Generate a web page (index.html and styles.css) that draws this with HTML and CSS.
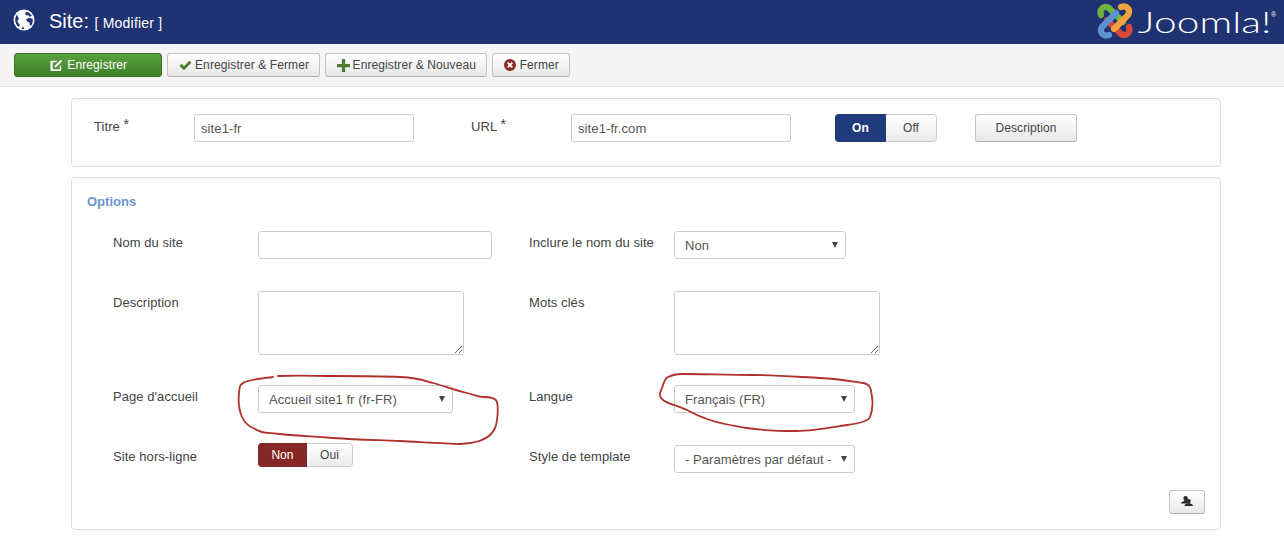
FILE: index.html
```html
<!DOCTYPE html>
<html lang="fr">
<head>
<meta charset="utf-8">
<title>Site: Modifier</title>
<link rel="stylesheet" href="styles.css">
</head>
<body>
<header class="topbar">
  <div class="title-group">
    <svg class="globe" viewBox="0 0 22 22" width="22" height="22"><circle cx="11" cy="11" r="10.500" fill="#fff"/><path fill="#1f3271" d="M4.300 5.300C3 6.800 2.200 8.800 2.200 11c0 2.900 1.400 5.500 3.600 7.100.6-.9.900-1.900.7-3.100-.9-.8-1.800-1.500-2-2.600-.2-1.200 1.300-1.400 1.300-2.600 0-1.300-1.500-2.200-1.500-4.100zM12 4.200l1.800-1.500c2.200.7 4 2.200 5 4.200l-2.300.9-1.300-1.700-2 .4zM13 10.500l3-1.700 3.600.9c.5 2.500-.1 5-1.500 7l-1.300-.6-.3-2.700-2.200-.6zM8.500 19.500l1.500-2 1.500 2.500c-1 .2-2 .1-3-.5z"/></svg>
    <h1 class="page-title">Site: <small>[ Modifier ]</small></h1>
  </div>
  <div class="brand">
    <svg class="brand-mark" viewBox="0 0 38 38" width="38" height="38" fill="none" stroke-linecap="round" stroke-width="6.200">
      <path stroke="#6fb33f" d="M5 13C3 7 8 3 13 6L27 20"/>
      <path stroke="#d8493a" transform="rotate(180 19 19)" d="M5 13C3 7 8 3 13 6L27 20"/>
      <path stroke="#5a92d2" transform="rotate(270 19 19)" d="M5 13C3 7 8 3 13 6L27 20"/>
      <path stroke="#f0a23c" transform="rotate(90 19 19)" d="M5 13C3 7 8 3 13 6L27 20"/>
    </svg>
    <div class="brand-text">
      <span class="brand-name">Joomla!</span>
      <span class="brand-reg">®</span>
    </div>
  </div>
</header>

<nav class="toolbar">
  <button class="btn btn-save" type="button">
    <svg class="ico" viewBox="0 0 14 14" width="13" height="13"><path fill="#fff" d="M1.500 2H8L6.500 3.500H3V11h7.500V8L12 6.500v5.500a1 1 0 0 1-1 1H1.500a1 1 0 0 1-1-1V3a1 1 0 0 1 1-1zM11.500 .8l1.700 1.700L7 8.700l-2.300.6.600-2.300z"/></svg>
    Enregistrer
  </button>
  <button class="btn" type="button">
    <svg class="ico" viewBox="0 0 14 12" width="13" height="11"><path fill="#4f7a32" d="M.5 6.500 2.800 4.200 5.300 6.700 11.200.8 13.500 3.100 5.300 11.300z"/></svg>
    Enregistrer &amp; Fermer
  </button>
  <button class="btn" type="button">
    <svg class="ico" viewBox="0 0 12 12" width="13" height="13"><path fill="#4f7a32" d="M4.500 0h3v4.500H12v3H7.500V12h-3V7.500H0v-3h4.500z"/></svg>
    Enregistrer &amp; Nouveau
  </button>
  <button class="btn btn-close" type="button">
    <svg class="ico" viewBox="0 0 12 12" width="12" height="12"><circle cx="6" cy="6" r="6" fill="#8e2a2a"/><path stroke="#fff" stroke-width="1.800" d="M3.700 3.700l4.600 4.600M8.300 3.700l-4.600 4.600"/></svg>
    Fermer
  </button>
</nav>

<main class="content">
  <section class="panel panel-head">
    <label class="head-label">Titre <span class="req">*</span></label>
    <input class="field head-input" type="text" value="site1-fr">
    <label class="head-label head-label-url">URL <span class="req">*</span></label>
    <input class="field head-input" type="text" value="site1-fr.com">
    <div class="toggle toggle-head">
      <span class="toggle-on toggle-blue">On</span><span class="toggle-off">Off</span>
    </div>
    <button class="btn btn-desc" type="button">Description</button>
  </section>

  <section class="panel panel-options">
    <h2 class="legend">Options</h2>
    <div class="row row-a">
      <label class="label">Nom du site</label>
      <div class="col-field"><input class="field w-234" type="text"></div>
      <label class="label">Inclure le nom du site</label>
      <div class="select w-172"><span class="select-text">Non</span></div>
    </div>
    <div class="row row-b">
      <label class="label">Description</label>
      <div class="col-field"><textarea class="area"></textarea></div>
      <label class="label">Mots clés</label>
      <textarea class="area"></textarea>
    </div>
    <div class="row row-c">
      <label class="label">Page d'accueil</label>
      <div class="col-field"><div class="select w-195"><span class="select-text">Accueil site1 fr (fr-FR)</span></div></div>
      <label class="label">Langue</label>
      <div class="select w-181"><span class="select-text">Français (FR)</span></div>
    </div>
    <div class="row row-d">
      <label class="label label-low">Site hors-ligne</label>
      <div class="col-field">
        <div class="toggle toggle-small"><span class="toggle-on toggle-red">Non</span><span class="toggle-off toggle-off-small">Oui</span></div>
      </div>
      <label class="label label-low">Style de template</label>
      <div class="select w-181 select-low"><span class="select-text">- Paramètres par défaut -</span></div>
    </div>
    <div class="foot">
      <button class="btn btn-users" type="button" aria-label="Utilisateurs">
        <svg viewBox="0 0 14 12" width="14" height="12"><path fill="#2a2a2a" d="M5.500 0C7 0 7.800 1 7.800 2.300c0 1-.5 1.800-1 2.300v.8c1 .3 1.500.6 1.500.6-.8.300-1.300.8-1.300 1.500H1c0-1.300 1.300-2 3.300-2.500v-.7c-.5-.5-.9-1.200-.9-2C3.400 1 4 0 5.500 0zM8.800 3c1.200 0 1.900.9 1.900 2 0 .9-.4 1.500-.8 1.900v.7c1.800.4 3.100 1 3.100 2.400H4.500c0-1.400 1.300-2 3.100-2.400v-.7C7.200 6.500 6.800 5.900 6.800 5c0-1.100.8-2 2-2z"/></svg>
      </button>
    </div>
  </section>
</main>

<svg class="marks" viewBox="0 0 1284 536" width="1284" height="536" fill="none" stroke="#b0302c" stroke-width="1.800" stroke-linecap="round" stroke-linejoin="round" aria-hidden="true">
  <path d="M278 376C300 375 315 376 333 376S380 376 400 377S425 381 433 383S455 390 467 393S478 397 483 397S496 398 497 402S498 412 497 420S494 431 490 435S475 444 460 444S420 442 400 441S360 440 333 438S300 436 280 434S265 434 257 430S245 424 242 417S238 402 239 393S240 386 243 383S258 379 273 377"/>
  <path d="M682 374C700 374 730 375 753 375S800 377 820 378S855 382 863 383S871 390 872 397S872 412 870 417S855 424 847 425S815 431 797 431S765 431 747 428S720 424 707 419S695 414 687 410S668 404 663 400S660 393 662 388S664 379 668 377S678 374 682 374"/>
</svg>
</body>
</html>
```

FILE: styles.css
```css
* { box-sizing: border-box; }
html, body { margin: 0; padding: 0; }
body {
  position: relative;
  width: 1284px;
  height: 536px;
  overflow: hidden;
  background: #fff;
  color: #444;
  font-family: "Liberation Sans", Arial, sans-serif;
  font-size: 13px;
  letter-spacing: .06px;
}

.topbar {
  height: 44px;
  background: #1f3271;
  display: flex;
  justify-content: space-between;
  align-items: center;
  padding: 0 7px 0 13px;
}
.title-group { display: flex; align-items: center; gap: 14px; }
.globe { display: block; margin-top: -4px; }
.page-title {
  margin: -2px 0 0;
  font-size: 20px;
  font-weight: 400;
  letter-spacing: 0;
  color: #fff;
}
.page-title small { font-size: 14px; letter-spacing: .2px; }

.brand {
  width: 181px;
  display: flex;
  align-items: center;
  justify-content: space-between;
}
.brand-mark { display: block; margin-top: -2px; }
.brand-text { display: flex; align-items: flex-start; color: #fff; }
.brand-name {
  display: block;
  font-family: Lato, sans-serif;
  font-weight: 300;
  font-size: 29px;
  line-height: 40px;
  white-space: nowrap;
  transform: scaleX(1.4);
  transform-origin: right center;
}
.brand-reg {
  font-size: 7px;
  line-height: 9px;
  width: 6px;
  margin-top: 8px;
}

.toolbar {
  height: 43px;
  background: #f5f5f5;
  border-bottom: 1px solid #e6e6e6;
  display: flex;
  align-items: flex-start;
  gap: 5px;
  padding: 9px 14px 0;
}

.btn {
  height: 24px;
  padding: 0 9.500px 0 11px;
  border: 1px solid #c4c4c4;
  border-bottom-color: #b0b0b0;
  border-radius: 3px;
  background: linear-gradient(#fff, #e8e8e8);
  color: #444;
  font: inherit;
  font-size: 12px;
  letter-spacing: .1px;
  display: inline-flex;
  align-items: center;
  justify-content: center;
  gap: 3px;
}
.ico { flex: none; }
.btn-save {
  width: 148px;
  gap: 4px;
  background: linear-gradient(#59a13d, #3f7f2a);
  border-color: #3c7329;
  color: #fff;
}
.btn-close { width: 78px; gap: 4px; }

.content { padding: 11px 63px 0 71px; }
.panel {
  border: 1px solid #ddd;
  border-radius: 4px;
  background: #fff;
}
.panel-head {
  height: 69px;
  display: flex;
  align-items: flex-start;
  padding: 15px 0 0 22px;
  margin-bottom: 10px;
}
.head-label { width: 100px; line-height: 24px; }
.head-label-url { margin-left: 57px; }
.req { font-size: 14px; position: relative; top: -2px; }

.field {
  height: 28px;
  padding: 0 6px;
  border: 1px solid #ccc;
  border-radius: 3px;
  font: inherit;
  letter-spacing: .1px;
  color: #555;
  background: #fff;
  display: block;
}
.head-input { width: 220px; }

.toggle {
  display: inline-flex;
  border-radius: 4px;
  overflow: hidden;
}
.toggle-head { height: 28px; margin-left: 44px; line-height: 26px; }
.toggle-small { height: 24px; line-height: 22px; }
.toggle span { display: block; text-align: center; }
.toggle-on { color: #fff; font-weight: 700; font-size: 12px; }
.toggle-blue { background: #1f3a7d; width: 51px; line-height: 28px; }
.toggle-red { background: #842725; width: 49px; line-height: 24px; font-weight: 400; }
.toggle-off {
  border: 1px solid #ccc;
  border-left: 0;
  border-radius: 0 4px 4px 0;
  background: linear-gradient(#fff, #ebebeb);
  color: #444;
  font-size: 12px;
  width: 51px;
}
.toggle-off-small { width: 46px; }
.btn-desc { width: 102px; height: 28px; margin-left: 38px; padding: 0; }

.panel-options {
  height: 353px;
  padding: 16px 15px 0 15px;
}
.legend {
  margin: 0 0 21px;
  font-size: 13px;
  line-height: 16px;
  font-weight: 700;
  letter-spacing: 0;
  color: #6b94d0;
}

.row {
  display: grid;
  grid-template-columns: 145px 271px 145px 1fr;
  padding-left: 26px;
  align-items: start;
}
.row-a { margin-bottom: 32px; }
.row-b { margin-bottom: 30px; }
.row-c { margin-bottom: 30px; }

.label { line-height: 24px; }
.label-low { margin-top: 2px; }
.w-234 { width: 234px; }
.area {
  display: block;
  width: 206px;
  height: 64px;
  border: 1px solid #ccc;
  border-radius: 3px;
  background: #fff;
  resize: both;
  padding: 6px;
  font: inherit;
}

.select {
  position: relative;
  height: 28px;
  border: 1px solid #ccc;
  border-radius: 3px;
  background: #fff;
  color: #555;
  padding-left: 10px;
  line-height: 27px;
  font-size: 13px;
  white-space: nowrap;
}
.select::after {
  content: "";
  position: absolute;
  right: 7px;
  top: 10px;
  border: 3.500px solid transparent;
  border-top: 6px solid #444;
  border-bottom: 0;
}
.select-low { margin-top: 2px; }
.w-172 { width: 172px; }
.w-181 { width: 181px; }
.w-195 { width: 195px; }

.foot {
  display: flex;
  justify-content: flex-end;
  margin-top: 17px;
}
.btn-users { width: 36px; padding: 0; }

.marks {
  position: absolute;
  left: 0;
  top: 0;
  pointer-events: none;
}
```
